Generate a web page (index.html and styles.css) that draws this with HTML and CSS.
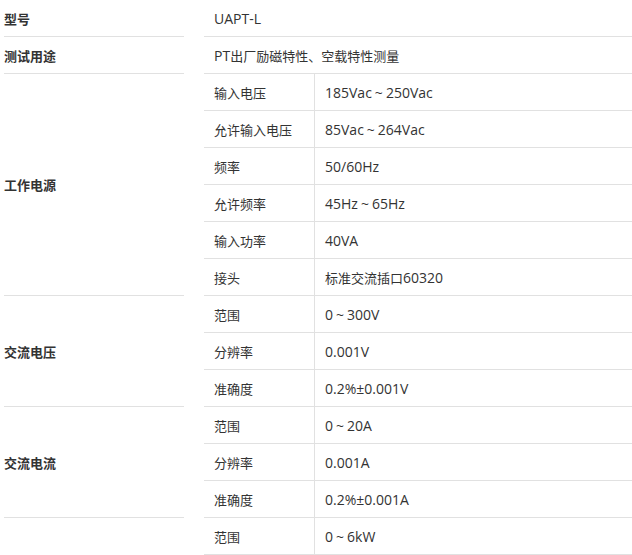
FILE: index.html
```html
<!DOCTYPE html>
<html lang="zh-CN">
<head>
<meta charset="utf-8">
<title>UAPT-L 参数</title>
<link rel="stylesheet" href="styles.css">
</head>
<body>
<div class="spec">
  <div class="group">
    <div class="label">型号</div>
    <div class="rows">
      <div class="row"><div class="full en">UAPT-L</div></div>
    </div>
  </div>
  <div class="group">
    <div class="label">测试用途</div>
    <div class="rows">
      <div class="row"><div class="full"><span class="en">PT</span>出厂励磁特性、空载特性测量</div></div>
    </div>
  </div>
  <div class="group">
    <div class="label">工作电源</div>
    <div class="rows">
      <div class="row"><div class="sub">输入电压</div><div class="val en">185Vac<span class="tilde">~</span>250Vac</div></div>
      <div class="row"><div class="sub">允许输入电压</div><div class="val en">85Vac<span class="tilde">~</span>264Vac</div></div>
      <div class="row"><div class="sub">频率</div><div class="val en">50/60Hz</div></div>
      <div class="row"><div class="sub">允许频率</div><div class="val en">45Hz<span class="tilde">~</span>65Hz</div></div>
      <div class="row"><div class="sub">输入功率</div><div class="val en">40VA</div></div>
      <div class="row"><div class="sub">接头</div><div class="val">标准交流插口<span class="en">60320</span></div></div>
    </div>
  </div>
  <div class="group">
    <div class="label">交流电压</div>
    <div class="rows">
      <div class="row"><div class="sub">范围</div><div class="val en">0<span class="tilde">~</span>300V</div></div>
      <div class="row"><div class="sub">分辨率</div><div class="val en">0.001V</div></div>
      <div class="row"><div class="sub">准确度</div><div class="val en">0.2%±0.001V</div></div>
    </div>
  </div>
  <div class="group">
    <div class="label">交流电流</div>
    <div class="rows">
      <div class="row"><div class="sub">范围</div><div class="val en">0<span class="tilde">~</span>20A</div></div>
      <div class="row"><div class="sub">分辨率</div><div class="val en">0.001A</div></div>
      <div class="row"><div class="sub">准确度</div><div class="val en">0.2%±0.001A</div></div>
    </div>
  </div>
  <div class="group group-open">
    <div class="label label-open"></div>
    <div class="rows">
      <div class="row"><div class="sub">范围</div><div class="val en">0<span class="tilde">~</span>6kW</div></div>
    </div>
  </div>
</div>
</body>
</html>
```

FILE: styles.css
```css
html, body {
  margin: 0;
  padding: 0;
  overflow: hidden;
  background: #fff;
}
body {
  font-family: "Open Sans", "Noto Sans CJK SC", sans-serif;
  font-size: 13px;
  color: #333;
}
.spec {
  padding-left: 4px;
}
.group {
  display: grid;
  grid-template-columns: 180px 1fr;
  column-gap: 20px;
}
.label {
  display: flex;
  align-items: center;
  font-weight: bold;
  border-bottom: 1px solid #e1e1e1;
}
.label-open {
  border-bottom: none;
}
.rows {
  display: flex;
  flex-direction: column;
}
.row {
  display: flex;
  height: 36px;
  border-bottom: 1px solid #e1e1e1;
}
.full, .sub, .val {
  display: flex;
  align-items: center;
  padding-left: 10px;
  white-space: pre;
}
.full {
  flex: 1;
}
.sub {
  width: 100px;
  border-right: 1px solid #e1e1e1;
}
.val {
  flex: 1;
}
.en {
  font-size: 14px;
}
.tilde {
  padding: 0 3px;
}
```
